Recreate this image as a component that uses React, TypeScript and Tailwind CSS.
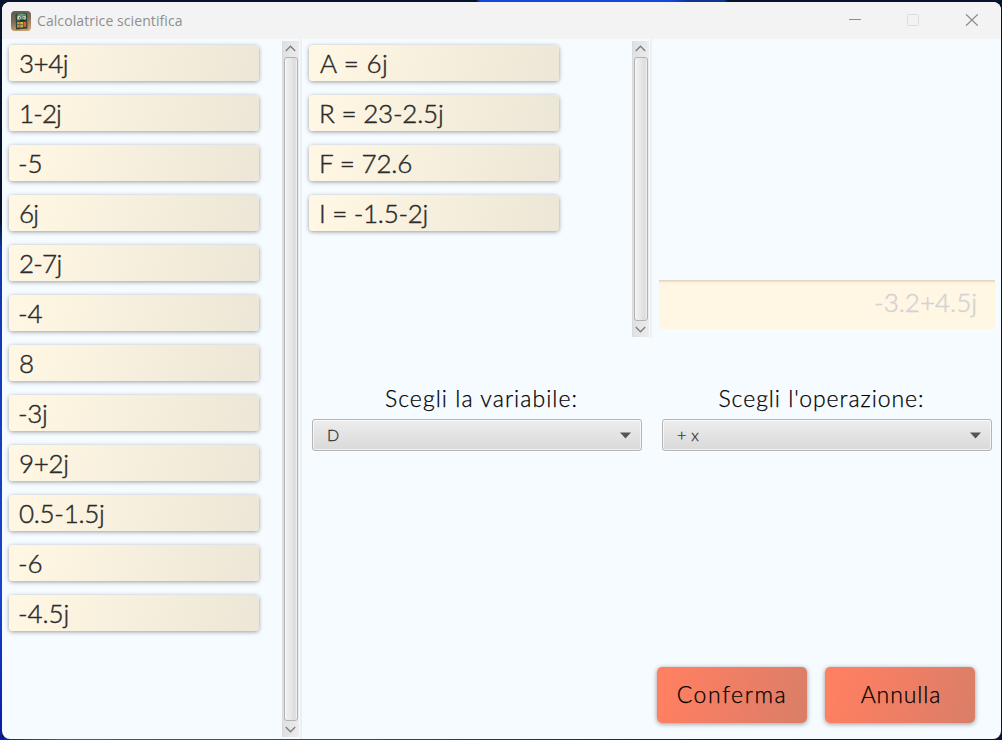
import React from "react";

type Entry = { text: string; spacing: string };

const stack: Entry[] = [
  { text: "3+4j", spacing: "tracking-[-0.5px]" },
  { text: "1-2j", spacing: "tracking-[-0.9px]" },
  { text: "-5", spacing: "-ml-px tracking-[0px]" },
  { text: "6j", spacing: "tracking-[-0.8px]" },
  { text: "2-7j", spacing: "tracking-[-0.8px]" },
  { text: "-4", spacing: "-ml-px tracking-[-0.1px]" },
  { text: "8", spacing: "tracking-[0px]" },
  { text: "-3j", spacing: "-ml-px tracking-[-0.4px]" },
  { text: "9+2j", spacing: "tracking-[-0.3px]" },
  { text: "0.5-1.5j", spacing: "tracking-[-0.3px]" },
  { text: "-6", spacing: "-ml-px tracking-[-0.1px]" },
  { text: "-4.5j", spacing: "-ml-px tracking-[-0.1px]" },
];

const variables: Entry[] = [
  { text: "A = 6j", spacing: "ml-px tracking-[0.3px]" },
  { text: "R = 23-2.5j", spacing: "tracking-[-0.2px]" },
  { text: "F = 72.6", spacing: "tracking-[-0.2px]" },
  { text: "I = -1.5-2j", spacing: "tracking-[-0.3px]" },
];

function Card({ text, spacing }: Entry) {
  return (
    <div className="flex h-9 w-[250px] shrink-0 items-center rounded-[4px] bg-[linear-gradient(105deg,#fff7e3_5%,#ede7d7_95%)] pl-2.5 shadow-[0_1px_4px_rgba(0,0,0,0.38)]">
      <span className={`whitespace-pre text-[26px] leading-9 text-[#2b2b2b] [-webkit-text-stroke:0.45px_#2b2b2b] ${spacing}`}>{text}</span>
    </div>
  );
}

function Chevron({ down = false }: { down?: boolean }) {
  return (
    <svg width="11" height="7" viewBox="0 0 11 7" className={down ? "rotate-180" : ""}>
      <path d="M0.8 6 L5.5 1.2 L10.2 6" fill="none" stroke="#7d7d7d" strokeWidth="1.3" />
    </svg>
  );
}

function ScrollBar() {
  return (
    <div className="flex w-[17px] shrink-0 flex-col items-stretch bg-[linear-gradient(90deg,#d4d6d8_0px,#dfe0e1_1px,#ececec_17px)]">
      <div className="flex h-4 items-center justify-center pb-[2px]"><Chevron /></div>
      <div className="ml-[2px] w-3.5 flex-1 rounded-[3px] border border-[#b2b2b2] bg-[linear-gradient(90deg,#fafafa_0px,#ededed_2px,#e9e9e9_5px,#dcdcdc_10px,#f4f4f4_12px)]" />
      <div className="flex h-4 items-center justify-center"><Chevron down /></div>
    </div>
  );
}

function ScrollPane({ items, className }: { items: Entry[]; className: string }) {
  return (
    <div className={`flex justify-between border-r-2 border-[#eaf0f4] pt-0.5 pr-px ${className}`}>
      <div className="flex flex-col gap-3.5 pt-1">
        {items.map((e) => <Card key={e.text} {...e} />)}
      </div>
      <ScrollBar />
    </div>
  );
}

function Combo({ label, labelClass, value }: { label: string; labelClass: string; value: string }) {
  return (
    <div className="flex w-[330px] flex-col items-center">
      <div className={`h-[37px] whitespace-pre text-[23px] leading-[32px] text-black [-webkit-text-stroke:0.25px_#000] ${labelClass}`}>{label}</div>
      <div className="flex h-8 w-full items-center justify-between rounded-[3px] border border-[#b4b4b4] bg-[linear-gradient(#ededed,#d9d9d9)] pr-2.5 pl-3.5 shadow-[inset_0_0_0_1px_rgba(255,255,255,0.65),0_1px_0_rgba(255,255,255,0.8)]">
        <span className="text-[16px] leading-7 tracking-[0.3px] text-[#333] [-webkit-text-stroke:0.3px_#333]">{value}</span>
        <svg width="11" height="7" viewBox="0 0 11 7"><path d="M0 0.5 H11 L5.5 6.5 Z" fill="#555" /></svg>
      </div>
    </div>
  );
}

function ActionButton({ children, className }: { children: string; className: string }) {
  return (
    <button className={`h-14 w-[150px] rounded-[5px] bg-[linear-gradient(110deg,#ff7f61_10%,#db7e68_95%)] pb-0.5 text-[23px] leading-[54px] text-black shadow-[0_1px_5px_rgba(0,0,0,0.4)] [-webkit-text-stroke:0.25px_#000] ${className}`}>
      {children}
    </button>
  );
}

function AppIcon() {
  return (
    <svg width="20" height="20" viewBox="0 0 20 20">
      <defs>
        <linearGradient id="iconBg" x1="0" y1="0" x2="0.3" y2="1">
          <stop offset="0" stopColor="#5c5750" />
          <stop offset="0.55" stopColor="#806e59" />
          <stop offset="1" stopColor="#c49a70" />
        </linearGradient>
      </defs>
      <rect width="20" height="20" rx="4" fill="url(#iconBg)" />
      <path d="M4.5 3 L16 2.2 L16.5 17.5 L5 18.5 Z" fill="#2d4439" />
      <path d="M6 3.6 L15 3 V8.8 L6 9.4 Z" fill="#5c8470" />
      <path d="M8 3.8 L12.5 3.5" stroke="#4fae86" strokeWidth="1.4" />
      <circle cx="8" cy="6.8" r="1.7" fill="#e0e8cc" />
      <circle cx="13.2" cy="6.6" r="1.7" fill="#e0e8cc" />
      <circle cx="8.4" cy="6.9" r="0.7" fill="#172722" />
      <circle cx="12.9" cy="6.7" r="0.7" fill="#172722" />
      <path d="M9 9.2 H13" stroke="#172722" strokeWidth="1" />
      <rect x="6" y="11" width="2.8" height="2.5" fill="#c7943f" />
      <rect x="9.2" y="11" width="2.8" height="2.5" fill="#d4b450" />
      <rect x="12.4" y="11" width="2.8" height="4.8" fill="#d8643e" />
      <rect x="6" y="14.1" width="2.8" height="2.4" fill="#d08a3b" />
      <rect x="9.2" y="14.1" width="2.8" height="2.4" fill="#d2a73c" />
    </svg>
  );
}

export default function App() {
  return (
    <div className="h-[740px] w-[1002px] overflow-hidden bg-[linear-gradient(90deg,#07142d_0px,#07142d_476px,#1746df_480px,#1746df_670px,#0b3392_690px,#0b3392_724px,#07142d_728px)] font-['Lato','Liberation_Sans',sans-serif] font-light">
      <div className="h-full bg-[linear-gradient(#07142d,#07142d_220px,#1236ae_250px,#1746cc_590px,#071aa8)] bg-[length:2px_740px] bg-no-repeat">
        <div className="h-full bg-[linear-gradient(90deg,#071aa8,#315bad_60px,#31418b_350px,#17153e_750px,#151329)] bg-[length:1002px_3px] bg-bottom bg-no-repeat pt-0.5 pr-px pb-px pl-0.5">
          <div className="flex h-full flex-col overflow-hidden rounded-[8px] bg-[#f6fbff]">
            <header className="flex h-[37px] shrink-0 items-center justify-between bg-[#f3f3f3] pr-[23px] pl-[9px]">
              <div className="flex items-center gap-1.5">
                <AppIcon />
                <span className="font-['Open_Sans','Noto_Sans',sans-serif] text-[14px] leading-5 font-normal tracking-[0.08px] text-[#8e8e8e]">Calcolatrice scientifica</span>
              </div>
              <div className="flex items-center gap-[46px] pb-px">
                <svg width="12" height="12"><path d="M0 5.5 H12" stroke="#8c8c8c" /></svg>
                <svg width="12" height="12"><rect x="0.5" y="0.5" width="11" height="11" rx="1" fill="none" stroke="#dedede" /></svg>
                <svg width="13" height="12"><path d="M1 0.3 L12.8 11.7 M12.8 0.3 L1 11.7" stroke="#898989" strokeWidth="1.2" /></svg>
              </div>
            </header>
            <main className="flex min-h-0 flex-1">
              <ScrollPane items={stack} className="w-[300px] shrink-0 pb-[2px] pl-[7px]" />
              <div className="flex flex-1 flex-col">
                <div className="flex h-[299px] shrink-0">
                  <ScrollPane items={variables} className="w-[350px] shrink-0 pb-px pl-[7px]" />
                  <div className="flex flex-1 flex-col justify-end pr-1.5 pb-[9px] pl-[7px]">
                    <div className="flex h-[49px] items-center justify-end bg-[#fff6e3] pr-[18px] shadow-[inset_0_3px_3px_-2px_rgba(150,130,90,0.4)]">
                      <span className="pb-1.5 text-[26px] leading-8 tracking-[0px] text-[#d3d3d3] [-webkit-text-stroke:0.45px_#d3d3d3]">-3.2+4.5j</span>
                    </div>
                  </div>
                </div>
                <div className="flex gap-5 pt-11 pl-2.5">
                  <Combo label="Scegli la variabile:" labelClass="pl-[9px] tracking-[1.05px]" value="D" />
                  <Combo label="Scegli l'operazione:" labelClass="pr-[11px] tracking-[0.95px]" value="+ x" />
                </div>
                <div className="mt-auto flex justify-end gap-[18px] pr-[26px] pb-4">
                  <ActionButton className="tracking-[1.6px]">Conferma</ActionButton>
                  <ActionButton className="pl-[2px] tracking-[0.9px]">Annulla</ActionButton>
                </div>
              </div>
            </main>
          </div>
        </div>
      </div>
    </div>
  );
}
